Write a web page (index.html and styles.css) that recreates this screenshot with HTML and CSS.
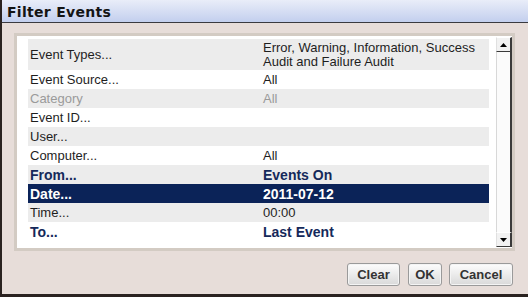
FILE: index.html
```html
<!DOCTYPE html>
<html>
<head>
<meta charset="utf-8">
<link rel="stylesheet" href="styles.css">
</head>
<body>
<div class="dialog">
  <div class="titlebar">Filter Events</div>
  <div class="content">
    <div class="panel">
      <div class="list">
        <div class="row alt tall"><span class="label">Event Types...</span><span class="value">Error, Warning, Information, Success Audit and Failure Audit</span></div>
        <div class="row"><span class="label">Event Source...</span><span class="value">All</span></div>
        <div class="row alt disabled"><span class="label">Category</span><span class="value">All</span></div>
        <div class="row"><span class="label">Event ID...</span><span class="value"></span></div>
        <div class="row alt"><span class="label">User...</span><span class="value"></span></div>
        <div class="row"><span class="label">Computer...</span><span class="value">All</span></div>
        <div class="row alt strong"><span class="label">From...</span><span class="value">Events On</span></div>
        <div class="row strong selected"><span class="label">Date...</span><span class="value">2011-07-12</span></div>
        <div class="row alt"><span class="label">Time...</span><span class="value">00:00</span></div>
        <div class="row strong"><span class="label">To...</span><span class="value">Last Event</span></div>
      </div>
      <div class="scrollbar">
        <div class="sb-btn"><svg width="7" height="4" viewBox="0 0 7 4"><path d="M0 4 L3.5 0 L7 4 Z" fill="#000"/></svg></div>
        <div class="sb-track"></div>
        <div class="sb-btn"><svg width="7" height="4" viewBox="0 0 7 4"><path d="M0 0 L3.5 4 L7 0 Z" fill="#000"/></svg></div>
      </div>
    </div>
    <div class="buttons">
      <button class="btn btn-clear">Clear</button>
      <button class="btn btn-ok">OK</button>
      <button class="btn btn-cancel">Cancel</button>
    </div>
  </div>
</div>
</body>
</html>
```
FILE: styles.css
```css
html, body {
  margin: 0;
  padding: 0;
  width: 528px;
  height: 297px;
  overflow: hidden;
  background: #e7ddd9;
}
.dialog {
  box-sizing: border-box;
  width: 528px;
  height: 297px;
  border-left: 2px solid #2a2220;
  border-bottom: 3px solid #2a2220;
  background: #e7ddd9;
  display: flex;
  flex-direction: column;
  font-family: "Liberation Sans", Arial, sans-serif;
}
.titlebar {
  height: 20px;
  padding: 2px 0 0 5px;
  line-height: 20px;
  border-bottom: 1px solid #3a3a40;
  background: linear-gradient(#e9edf9, #c3cfee);
  font-family: "DejaVu Sans", Verdana, sans-serif;
  font-weight: bold;
  font-size: 14px;
  color: #141414;
  letter-spacing: 0.3px;
}
.content {
  flex: 1;
  display: flex;
  flex-direction: column;
  padding: 10px 13px 0 12px;
}
.panel {
  height: 210px;
  border: 3px solid #d3cbc3;
  background: #fff;
  display: flex;
  padding: 1px 0 1px 11px;
}
.list {
  flex: 1;
  margin-top: 2px;
  margin-right: 7px;
  display: flex;
  flex-direction: column;
}
.row {
  display: grid;
  grid-template-columns: 233px 1fr;
  align-items: center;
  height: 19px;
  padding-left: 2px;
  font-size: 13px;
  color: #1e1e1e;
  white-space: nowrap;
}
.row.tall {
  height: 31px;
}
.row.tall .value {
  white-space: normal;
  line-height: 14px;
}
.row.alt {
  background: #ececec;
}
.row.disabled {
  color: #9a9a9a;
}
.row.strong {
  font-weight: bold;
  font-size: 14px;
  color: #15295a;
}
.row.selected {
  background: #0b2358;
  color: #fff;
}
.scrollbar {
  width: 16px;
  display: flex;
  flex-direction: column;
}
.sb-btn {
  box-sizing: border-box;
  height: 15px;
  background: #f2f2f2;
  border-top: 1px solid #fff;
  border-left: 1px solid #e0e0e0;
  border-right: 2px solid #3a3a3a;
  border-bottom: 1px solid #3a3a3a;
  display: flex;
  align-items: center;
  justify-content: center;
}
.sb-track {
  flex: 1;
  background: #fbfbfb;
  border-left: 1px solid #d8d8d8;
  border-right: 2px solid #3a3a3a;
}
.buttons {
  display: flex;
  justify-content: flex-end;
  gap: 8px;
  margin-top: 12px;
  padding-right: 2px;
}
.btn {
  box-sizing: border-box;
  height: 23px;
  padding: 0;
  border: 1px solid #9a9a9a;
  border-radius: 3px;
  background: linear-gradient(#fdfdfd, #d9d9d9);
  font-family: "Liberation Sans", Arial, sans-serif;
  font-weight: bold;
  font-size: 13px;
  color: #333;
  box-shadow: inset 0 0 0 1px #f4f4f4;
}
.btn-clear { width: 53px; }
.btn-ok { width: 34px; }
.btn-cancel { width: 64px; margin-left: -1px; }
```
